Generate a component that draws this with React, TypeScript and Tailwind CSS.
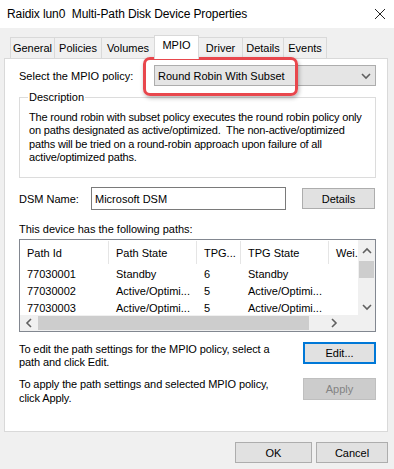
import React from "react";

const tabs = ["General", "Policies", "Volumes", "MPIO", "Driver", "Details", "Events"];
const tabWidths = [45, 48, 54, 45, 45, 42, 44];

const rows = [
  { id: "77030001", state: "Standby", tpg: "6", tpgState: "Standby" },
  { id: "77030002", state: "Active/Optimi...", tpg: "5", tpgState: "Active/Optimi..." },
  { id: "77030003", state: "Active/Optimi...", tpg: "5", tpgState: "Active/Optimi..." },
];

const cols = [89, 88, 44, 88, 30];

const Chevron = ({ dir, className }: { dir: "up" | "down" | "left" | "right"; className?: string }) => {
  const d = {
    up: "M1 6 L5 2 L9 6",
    down: "M1 2 L5 6 L9 2",
    left: "M6 1 L2 5 L6 9",
    right: "M2 1 L6 5 L2 9",
  }[dir];
  const horiz = dir === "left" || dir === "right";
  return (
    <svg width={horiz ? 8 : 10} height={horiz ? 10 : 8} viewBox={horiz ? "0 0 8 10" : "0 0 10 8"} className={className}>
      <path d={d} fill="none" stroke="#606060" strokeWidth="1.6" />
    </svg>
  );
};

const Button = ({ children, className = "", disabled = false, focused = false }: { children: React.ReactNode; className?: string; disabled?: boolean; focused?: boolean }) => (
  <div
    className={`flex items-center justify-center ${
      focused ? "border-2 border-[#0078d7]" : disabled ? "border border-[#bfbfbf]" : "border border-[#adadad]"
    } ${disabled ? "bg-[#cccccc] text-[#838383]" : "bg-[#e1e1e1] text-black"} ${className}`}
  >
    {children}
  </div>
);

export default function App() {
  return (
    <div className="relative w-[394px] h-[469px] overflow-hidden bg-[#f0f0f0] text-[11px] text-black font-['Liberation_Sans',Arial,sans-serif] leading-[14px]">
      {/* Title bar */}
      <div className="h-[28px] bg-white flex items-center justify-between pl-[7px] pr-[8px]">
        <span className="text-[12px] tracking-[-0.1px]">Raidix lun0&nbsp; Multi-Path Disk Device Properties</span>
        <svg width="12" height="12" viewBox="0 0 12 12">
          <path d="M1 1 L11 11 M11 1 L1 11" stroke="#222" strokeWidth="1" />
        </svg>
      </div>

      {/* Tabs */}
      <div className="flex items-end h-[30px] pl-[10px]">
        {tabs.map((t, i) => {
          const active = t === "MPIO";
          return (
            <div
              key={t}
              style={{ width: tabWidths[i] }}
              className={`flex justify-center border-t border-l border-r border-[#d9d9d9] ${i > 0 ? "-ml-px" : ""} ${
                active
                  ? "relative z-10 h-[24px] -mb-px bg-white pt-[2px]"
                  : "h-[21px] bg-[#f0f0f0] pt-[3px]"
              }`}
            >
              {t}
            </div>
          );
        })}
      </div>

      {/* Panel */}
      <div className="ml-[4px] w-[384px] h-[374px] bg-white border border-[#d9d9d9] pl-[14px] pr-[11px] pt-[6px]">
        {/* Policy row */}
        <div className="flex items-center h-[21px]">
          <div className="w-[135px]">Select the MPIO policy:</div>
          <div className="w-[222px] h-[21px] flex items-center justify-between bg-[#e5e5e5] border border-[#adadad] pl-[3px] pr-[4px]">
            <span>Round Robin With Subset</span>
            <Chevron dir="down" />
          </div>
        </div>

        {/* Description */}
        <fieldset className="mt-[4px] h-[88px] border border-[#dcdcdc] pl-[9px]">
          <legend className="ml-[-1px] px-[1px]">Description</legend>
          <div className="pt-[7px] leading-[13.4px] whitespace-nowrap tracking-[-0.18px]">
            <div>The round robin with subset policy executes the round robin policy only</div>
            <div>on paths designated as active/optimized.&nbsp; The non-active/optimized</div>
            <div>paths will be tried on a round-robin approach upon failure of all</div>
            <div>active/optimized paths.</div>
          </div>
        </fieldset>

        {/* DSM row */}
        <div className="mt-[9px] flex items-center h-[23px]">
          <div className="w-[72px]">DSM Name:</div>
          <div className="w-[195px] h-[23px] border border-[#7a7a7a] flex items-center pl-[3px]">Microsoft DSM</div>
          <Button className="ml-[16px] w-[73px] h-[21px]">Details</Button>
        </div>

        <div className="mt-[12px]">This device has the following paths:</div>

        {/* List view */}
        <div className="mt-[3px] w-[357px] h-[93px] border border-[#828790] flex flex-col">
          <div className="flex h-[75px]">
            <div className="flex-1 overflow-hidden">
              <div className="flex h-[25px] items-center">
                {["Path Id", "Path State", "TPG...", "TPG State", "Wei."].map((h, i) => (
                  <div
                    key={h}
                    style={{ width: cols[i] }}
                    className={`shrink-0 h-[23px] flex items-center pl-[7px] ${i < 4 ? "border-r border-[#e5e5e5]" : ""}`}
                  >
                    {h}
                  </div>
                ))}
              </div>
              {rows.map((r) => (
                <div key={r.id} className="flex h-[17px] items-center">
                  {[r.id, r.state, r.tpg, r.tpgState, ""].map((c, i) => (
                    <div key={i} style={{ width: cols[i] }} className="shrink-0 pl-[7px] whitespace-nowrap">
                      {c}
                    </div>
                  ))}
                </div>
              ))}
            </div>
            {/* vertical scrollbar */}
            <div className="w-[17px] bg-[#f0f0f0] flex flex-col items-center">
              <div className="h-[21px] flex items-center justify-center">
                <Chevron dir="up" />
              </div>
              <div className="w-[15px] h-[17px] bg-[#cdcdcd]" />
              <div className="flex-1" />
              <div className="h-[17px] flex items-center justify-center">
                <Chevron dir="down" />
              </div>
            </div>
          </div>
          {/* horizontal scrollbar */}
          <div className="flex h-[16px]">
            <div className="flex-1 bg-[#f0f0f0] flex items-center">
              <div className="w-[18px] flex justify-center">
                <Chevron dir="left" />
              </div>
              <div className="w-[271px] h-[14px] bg-[#cdcdcd]" />
              <div className="flex-1 flex justify-center">
                <Chevron dir="right" />
              </div>
            </div>
            <div className="w-[17px] bg-[#f0f0f0]" />
          </div>
        </div>

        {/* Edit row */}
        <div className="mt-[10px] flex justify-between items-start">
          <div className="pt-[1px] leading-[13px] whitespace-nowrap tracking-[-0.1px]">
            <div>To edit the path settings for the MPIO policy, select a</div>
            <div>path and click Edit.</div>
          </div>
          <Button focused className="w-[73px] h-[22px]">Edit...</Button>
        </div>

        {/* Apply row */}
        <div className="mt-[8px] flex justify-between items-start">
          <div className="leading-[14px] whitespace-nowrap tracking-[-0.1px]">
            <div>To apply the path settings and selected MPIO policy,</div>
            <div>click Apply.</div>
          </div>
          <Button disabled className="mt-[1px] w-[73px] h-[22px]">Apply</Button>
        </div>
      </div>

      {/* Bottom buttons */}
      <div className="mt-[10px] flex justify-end gap-[4px] pr-[6px]">
        <Button className="w-[77px] h-[21px]">OK</Button>
        <Button className="w-[72px] h-[21px]">Cancel</Button>
      </div>

      {/* Red highlight annotation */}
      <div className="absolute left-[143px] top-[57px] w-[155px] h-[39px] rounded-[7px] border-[3px] border-[#e8474d] shadow-[1px_2px_4px_rgba(0,0,0,0.3)]" />
    </div>
  );
}
